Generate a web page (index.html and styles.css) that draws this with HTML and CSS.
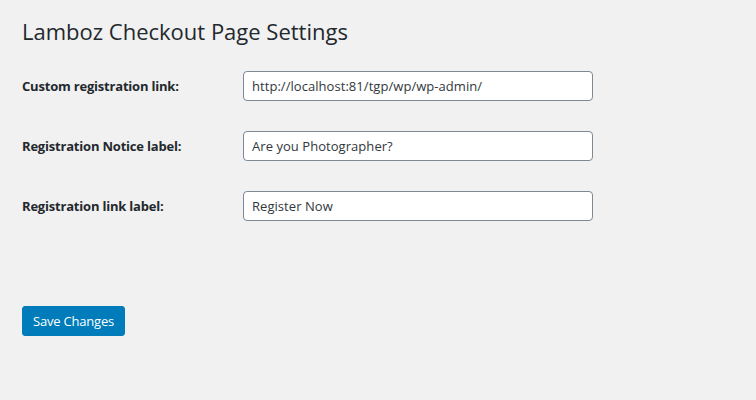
FILE: index.html
```html
<!DOCTYPE html>
<html>
<head>
<meta charset="utf-8">
<link rel="stylesheet" href="styles.css">
</head>
<body>
<div class="wrap">
  <h1 class="title">Lamboz Checkout Page Settings</h1>
  <div class="form">
    <div class="row">
      <label class="label">Custom registration link:</label>
      <input class="field" type="text" value="http://localhost:81/tgp/wp/wp-admin/">
    </div>
    <div class="row">
      <label class="label">Registration Notice label:</label>
      <input class="field" type="text" value="Are you Photographer?">
    </div>
    <div class="row">
      <label class="label">Registration link label:</label>
      <input class="field" type="text" value="Register Now">
    </div>
  </div>
  <button class="btn" type="button">Save Changes</button>
</div>
</body>
</html>
```
FILE: styles.css
```css
html, body {
  margin: 0;
  padding: 0;
  background: #f1f1f1;
}
body {
  font-family: "Open Sans", "Noto Sans", sans-serif;
  color: #1d2327;
  width: 756px;
  height: 400px;
  overflow: hidden;
}
.wrap {
  padding: 0 22px;
}
.title {
  margin: 0;
  padding-top: 16px;
  font-size: 22px;
  font-weight: 400;
  line-height: 30px;
  color: #23282d;
  letter-spacing: 0;
}
.form {
  display: flex;
  flex-direction: column;
  gap: 30px;
  margin-top: 25px;
}
.row {
  display: flex;
  align-items: center;
  height: 30px;
}
.label {
  width: 221px;
  font-size: 13px;
  font-weight: 700;
  color: #23282d;
  letter-spacing: -0.2px;
}
.field {
  box-sizing: border-box;
  width: 350px;
  height: 30px;
  margin: 0;
  padding: 0 8px;
  border: 1px solid #7e8993;
  border-radius: 4px;
  background: #fff;
  font-family: inherit;
  font-size: 13px;
  color: #32373c;
  letter-spacing: 0.05px;
  outline: none;
}
.btn {
  margin-top: 85px;
  height: 30px;
  padding: 0 10px;
  border: 1px solid #007cba;
  border-radius: 3px;
  background: #007cba;
  color: #fff;
  font-family: inherit;
  font-size: 13px;
  letter-spacing: -0.2px;
  cursor: pointer;
}
```
